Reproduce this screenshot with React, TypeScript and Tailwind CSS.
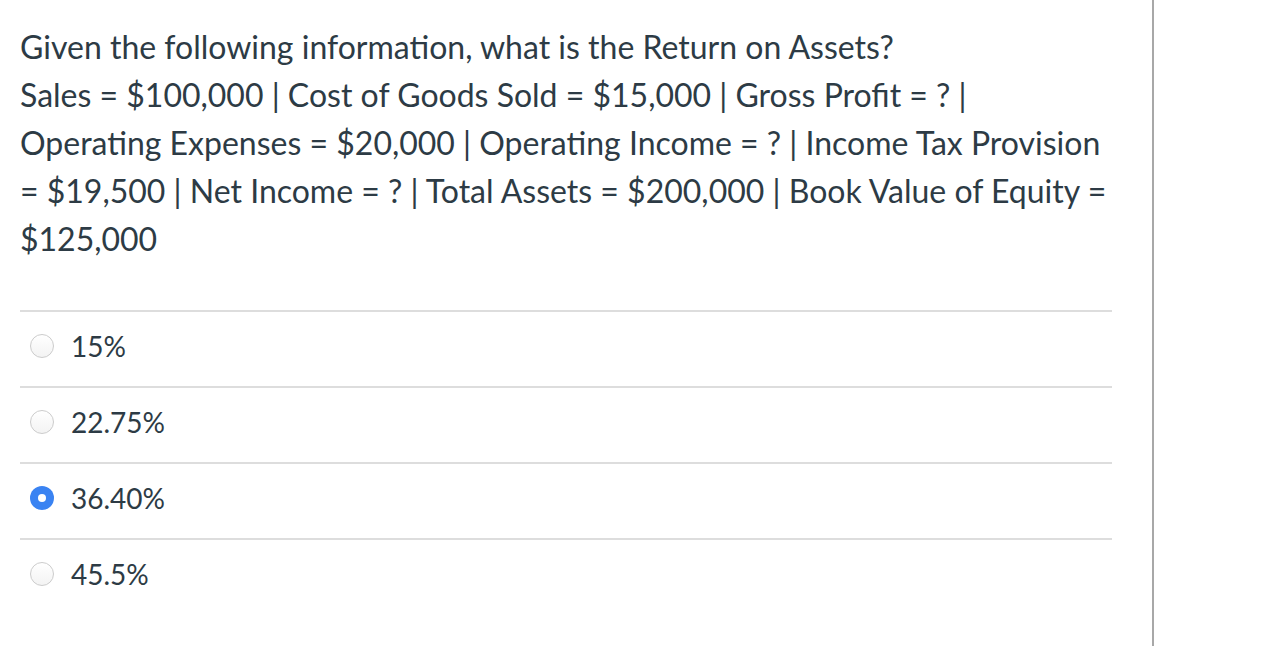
import React from 'react';

const answers = [
  { id: 'a', label: '15%', checked: false },
  { id: 'b', label: '22.75%', checked: false },
  { id: 'c', label: '36.40%', checked: true },
  { id: 'd', label: '45.5%', checked: false },
];

const Radio: React.FC<{ checked: boolean }> = ({ checked }) =>
  checked ? (
    <span className="flex h-[24px] w-[24px] items-center justify-center rounded-full bg-[#3a83f2]">
      <span className="h-[8px] w-[8px] rounded-full bg-white" />
    </span>
  ) : (
    <span className="block h-[24px] w-[24px] rounded-full border border-[#cccccc] bg-gradient-to-b from-white to-[#f3f3f3]" />
  );

const App: React.FC = () => {
  return (
    <div className="flex min-h-[646px] bg-white font-['Lato',sans-serif] text-[#2d3b45]">
      <div className="w-[1152px] shrink-0 pl-[20px] pt-[23px]">
        <div className="w-[1092px]">
          <p className="text-[32px] leading-[48px]">
            Given the following information, what is the Return on Assets?
            <br />
            Sales = $100,000 | Cost of Goods Sold = $15,000 | Gross Profit = ? | Operating Expenses =
            $20,000 | Operating Income = ? | Income Tax Provision = $19,500 | Net Income = ? | Total
            Assets = $200,000 | Book Value of Equity = $125,000
          </p>

          <div className="mt-[47px]">
            {answers.map((a) => (
              <label
                key={a.id}
                className="flex h-[76px] items-center border-t-2 border-[#dddddd] pb-[6px] text-[28px]"
              >
                <span className="ml-[10px] mr-[17px]">
                  <Radio checked={a.checked} />
                </span>
                <span>{a.label}</span>
              </label>
            ))}
          </div>
        </div>
      </div>
      <div className="w-[2px] self-stretch bg-[#a8a8a8]" />
    </div>
  );
};

export default App;
